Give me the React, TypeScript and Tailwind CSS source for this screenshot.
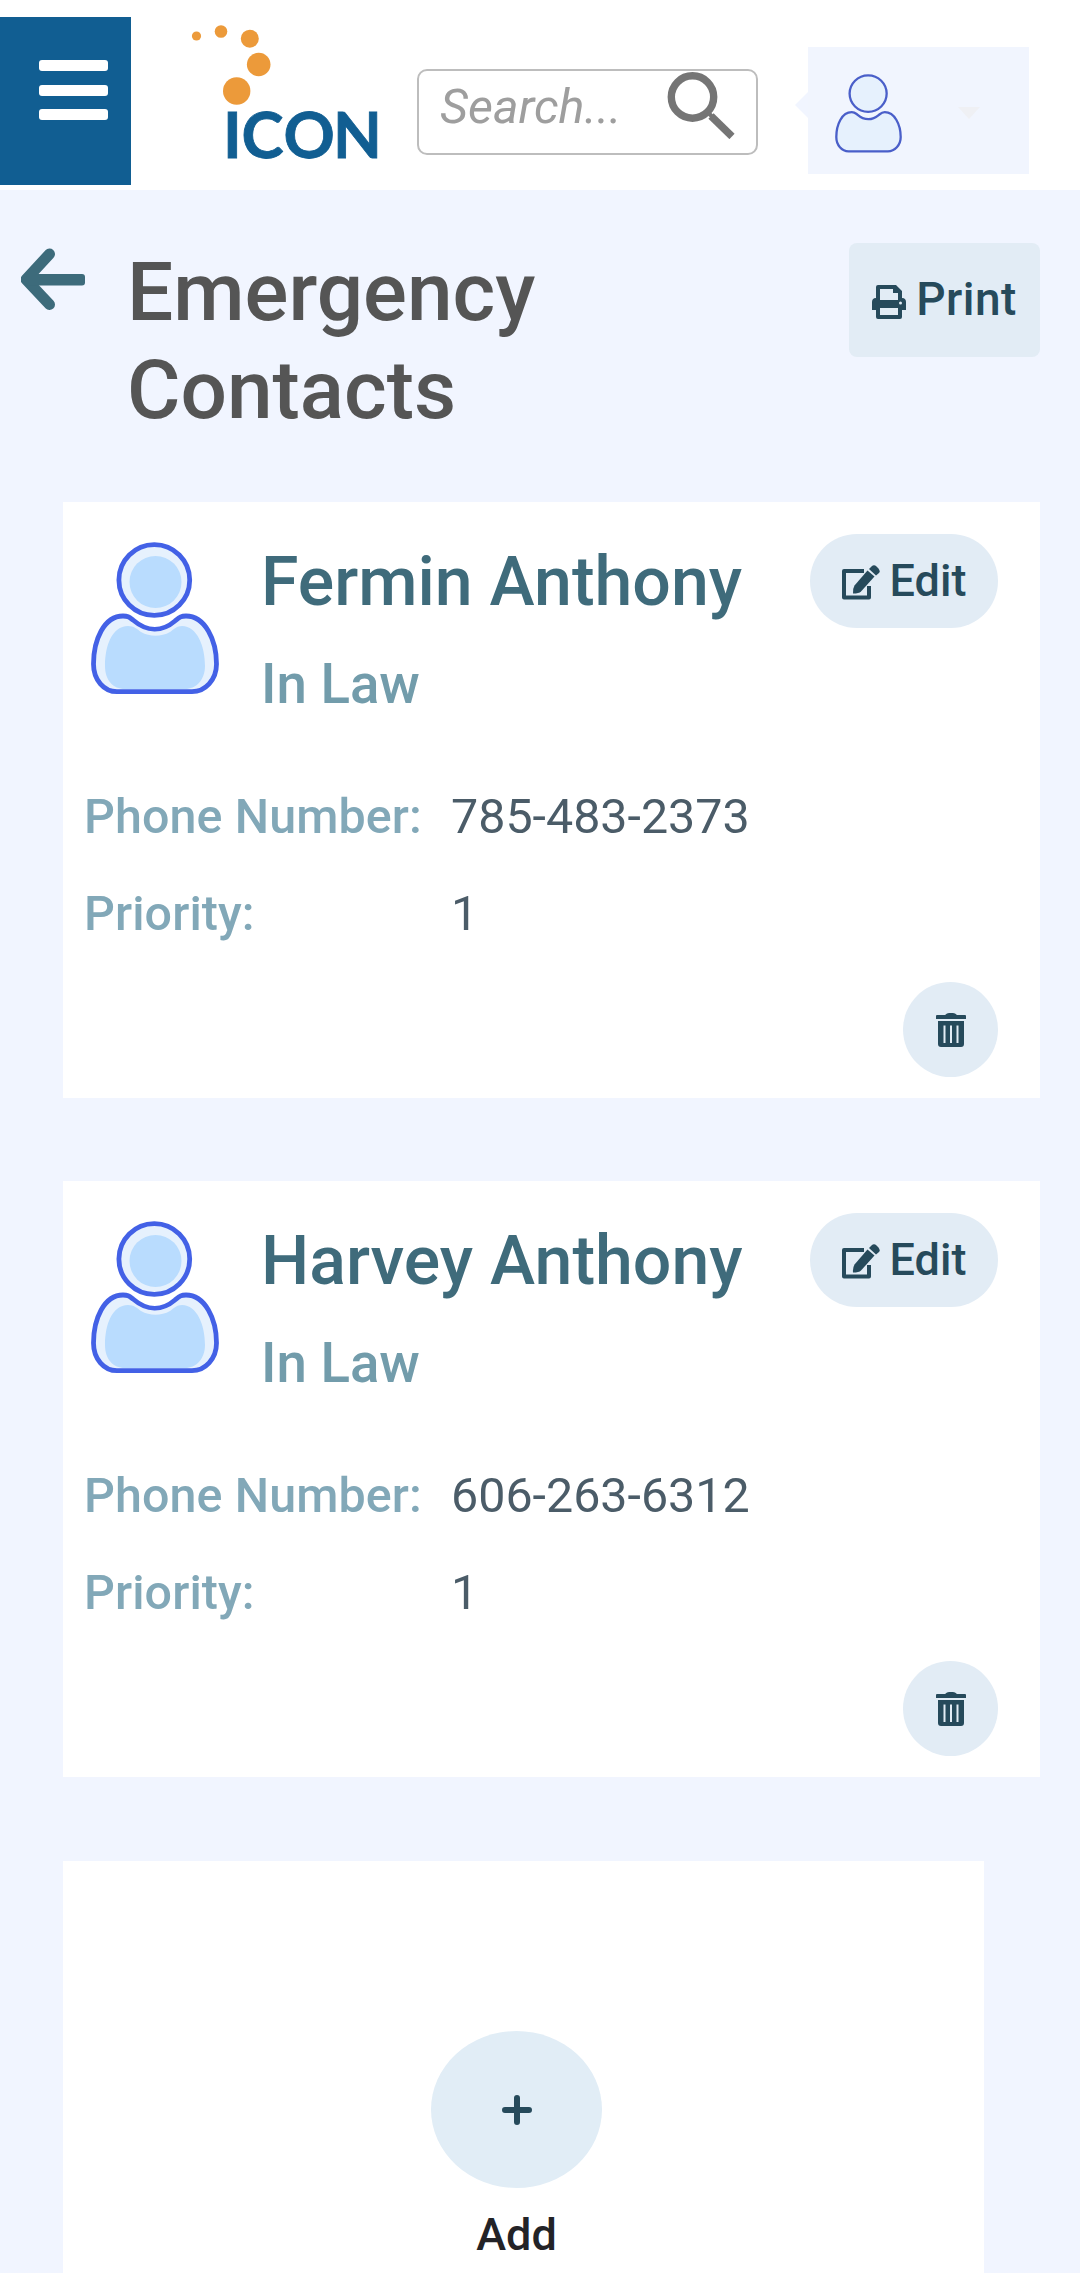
import React from 'react';

interface Contact {
  id: number;
  name: string;
  relation: string;
  phone: string;
  priority: number;
}

const contacts: Contact[] = [
  { id: 1, name: 'Fermin Anthony', relation: 'In Law', phone: '785-483-2373', priority: 1 },
  { id: 2, name: 'Harvey Anthony', relation: 'In Law', phone: '606-263-6312', priority: 1 }
];

function Logo() {
  return (
    <svg viewBox="0 0 210 160" className="w-[210px] h-[160px]" aria-label="ICON">
      <g fill="#ec9a3a">
        <circle cx="16.5" cy="19" r="4.6" />
        <circle cx="41" cy="14.5" r="6.3" />
        <circle cx="69.8" cy="21.7" r="9" />
        <circle cx="78.7" cy="47.5" r="11.8" />
        <circle cx="56.7" cy="74" r="13.7" />
      </g>
      <text
        x="43 61.5 103.5 153"
        y="141"
        className="font-['Lato',sans-serif] font-bold text-[63.5px]"
        fill="#115e92"
        stroke="#115e92"
        strokeWidth="0.8"
      >
        ICON
      </text>
    </svg>
  );
}

function SearchIcon() {
  return (
    <svg viewBox="0 0 68 68" className="w-[68px] h-[68px] shrink-0" fill="none" stroke="#757575">
      <circle cx="25.5" cy="26" r="21.2" strokeWidth="7.4" />
      <path d="M41 41.500 46 46.500" strokeWidth="4" />
      <path d="M44 45 65 65.500" strokeWidth="7.4" />
    </svg>
  );
}

function PersonIcon({ small }: { small?: boolean }) {
  return (
    <svg
      viewBox="0 0 128 153"
      preserveAspectRatio="none"
      className={small ? 'w-[67px] h-[79px]' : 'w-[128px] h-[153px]'}
    >
      <g fill="#e6f1fd" stroke={small ? '#4a5fc9' : '#4361e6'} strokeWidth={small ? 4.4 : 4.8}>
        <circle cx="63.3" cy="38" r="35.400" />
        <path d="M32 74C37 74 38 75 42 78C56 90 71 90 84 79C89 75 90 74 95 74C114 74 125.500 98 125.500 122C125.500 138 114 149.700 101 149.700H26C13 149.700 2.500 138 2.500 122C2.500 98 13 74 32 74Z" />
      </g>
      {!small && (
        <g fill="#b9dcfe">
          <circle cx="64.5" cy="40" r="26" />
          <path d="M37 84C43 84 46 87 50 90C59 95 70 95 79 90C83 87 86 84 91 84C106 84 114 104 114 124C114 138 105 147 94 147H34C22 147 14 138 14 124C14 104 21 84 37 84Z" />
        </g>
      )}
    </svg>
  );
}

function BackArrow() {
  return (
    <svg viewBox="0 0 64 64" className="w-16 h-16 shrink-0">
      <path
        d="M28.500 7 5 32.500l23.500 25"
        fill="none"
        stroke="#3d6b7b"
        strokeWidth="11"
        strokeLinecap="round"
        strokeLinejoin="round"
      />
      <rect x="5" y="27" width="59" height="11.500" rx="3" fill="#3d6b7b" />
    </svg>
  );
}

function PrintIcon() {
  return (
    <svg viewBox="0 0 34 34" className="mt-1 w-[34px] h-[34px]" fill="#264a5b" fillRule="evenodd">
      <path d="M6 0H24L30 6V13C33 13 34 15 34 17V25H30V32Q30 34 28 34H6Q4 34 4 32V25H0V17C0 15 1 13 4 13V2Q4 0 6 0ZM8 4V15H26V8H21V4ZM8 23V30H26V23ZM28.500 16.500A1.500 1.500 0 1 0 28.500 19.500A1.500 1.500 0 1 0 28.500 16.500Z" />
    </svg>
  );
}

function EditIcon() {
  return (
    <svg viewBox="0 0 38 35" className="mt-0.5 w-[38px] h-[35px]">
      <path d="M22 6H2V32.500H27V21" fill="none" stroke="#264a5b" strokeWidth="4" strokeLinejoin="round" />
      <path d="M25.500 5.500 32.500 11.500 19 26.500Q17 28.500 11 28.500 10.500 24 12.500 20.500Z" fill="#264a5b" />
      <path d="M27 4 29.500 1.500Q32 -1 34.500 1.500L36.500 3.500Q38.500 6 37 8L34 10.500Z" fill="#264a5b" />
    </svg>
  );
}

function TrashIcon() {
  return (
    <svg viewBox="0 0 30 34" className="w-[30px] h-[34px]" fill="#264a5b" fillRule="evenodd">
      <path d="M1 2H9Q11 0 13 0H17Q19 0 21 2H29Q30 2 30 3V6H0V3Q0 2 1 2Z" />
      <path d="M2 8H28V31Q28 34 25 34H5Q2 34 2 31ZM7.500 12.500V30H9.500V12.500ZM14 12.500V30H16V12.500ZM20.500 12.500V30H22.500V12.500Z" />
    </svg>
  );
}

function Header() {
  return (
    <header className="flex items-start h-[190px] bg-white">
      <button className="mt-[17px] w-[131px] h-[168px] bg-[#115e92] flex flex-col gap-[13.5px] pt-[43px] pl-[39px]">
        <span className="w-[69px] h-[11px] rounded-[3px] bg-white" />
        <span className="w-[69px] h-[11px] rounded-[3px] bg-white" />
        <span className="w-[69px] h-[11px] rounded-[3px] bg-white" />
      </button>
      <div className="mt-[17px] ml-[49px]">
        <Logo />
      </div>
      <div className="mt-[69px] ml-[27px] w-[341px] h-[86px] flex items-start rounded-[10px] border-2 border-[#bdbdbd] pl-[21px]">
        <span className="w-[227px] text-[48.5px] leading-[72px] italic text-[#9e9e9e]">Search...</span>
        <SearchIcon />
      </div>
      <div className="mt-[47px] ml-[37px] flex items-start">
        <span className="mt-[45px] border-y-[13px] border-r-[13px] border-y-transparent border-r-[#f1f5ff]" />
        <div className="w-[221px] h-[127px] bg-[#f1f5fe] flex items-start pt-[27px] pl-[27px]">
          <PersonIcon small />
          <span className="mt-[33px] ml-[56px] border-x-[11px] border-t-[12px] border-x-transparent border-t-[#eff0f4]" />
        </div>
      </div>
    </header>
  );
}

function ContactCard({ contact }: { contact: Contact }) {
  return (
    <section className="w-[977px] h-[596px] bg-white flex flex-col">
      <div className="flex items-start h-[258px] pl-7 pr-[42px]">
        <div className="mt-[39.5px]">
          <PersonIcon />
        </div>
        <div className="ml-[42px] mt-[38px] flex-1 font-medium whitespace-nowrap">
          <h2 className="text-[68px] leading-[84px] text-[#3f6b7b]">{contact.name}</h2>
          <p className="mt-5 text-[54.6px] leading-[80px] text-[#729cab]">{contact.relation}</p>
        </div>
        <button className="mt-8 w-[188px] h-[94px] rounded-full bg-[#e2ecf5] flex items-center justify-center gap-2.5 text-[#264a5b]">
          <EditIcon />
          <span className="text-[45px] font-medium">Edit</span>
        </button>
      </div>
      <dl className="grid grid-cols-[367px_1fr] auto-rows-[97px] pl-[21px] text-[48.4px] leading-[114px]">
        <dt className="font-medium tracking-[0.1px] text-[#82a8b8]">Phone Number:</dt>
        <dd className="text-[#4b5c68]">{contact.phone}</dd>
        <dt className="font-medium tracking-[0.1px] text-[#82a8b8]">Priority:</dt>
        <dd className="text-[#4b5c68]">{contact.priority}</dd>
      </dl>
      <div className="flex justify-end pr-[42px] pt-7">
        <button className="w-[95px] h-[95px] rounded-full bg-[#e2ecf5] flex items-center justify-center">
          <TrashIcon />
        </button>
      </div>
    </section>
  );
}

export default function App() {
  return (
    <div className="w-[1080px] h-[2273px] overflow-hidden bg-[#f1f5ff] font-['Roboto',sans-serif]">
      <Header />
      <div className="flex items-start h-[312px] pl-[21px] pr-10">
        <div className="mt-[57px]">
          <BackArrow />
        </div>
        <h1 className="mt-[53px] ml-[42px] w-[500px] text-[81.9px] leading-[98px] font-medium text-[#555]">
          Emergency Contacts
        </h1>
        <button className="mt-[53px] ml-auto w-[191px] h-[114px] rounded-lg bg-[#e2ecf5] flex items-center justify-center gap-2.5 text-[#264a5b]">
          <PrintIcon />
          <span className="-mt-0.5 text-[46px] tracking-[0.4px] font-medium">Print</span>
        </button>
      </div>
      <main className="flex flex-col gap-[83px] pl-[63px]">
        {contacts.map((contact) => (
          <ContactCard key={contact.id} contact={contact} />
        ))}
        <section className="mt-px w-[921px] h-[596px] shrink-0 bg-white flex flex-col items-center pr-3.5 pt-[170px]">
          <button className="w-[171px] h-[157px] shrink-0 rounded-[50%] bg-[#e1edf6] flex items-center justify-center">
            <svg viewBox="0 0 30 30" className="w-[30px] h-[30px]">
              <path d="M3 15h24M15 3v24" stroke="#264a5b" strokeWidth="6" strokeLinecap="round" />
            </svg>
          </button>
          <span className="mt-5 text-[45px] leading-[54px] font-medium text-[#232327]">Add</span>
        </section>
      </main>
    </div>
  );
}
